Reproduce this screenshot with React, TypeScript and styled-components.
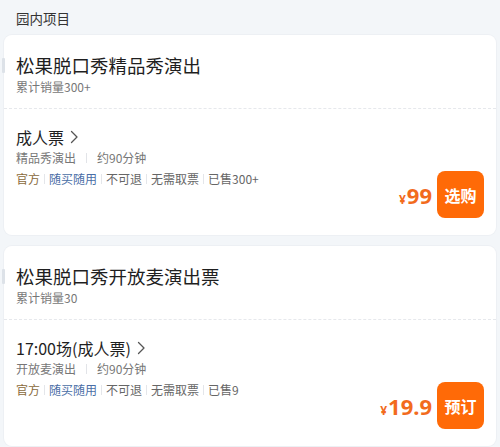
import { createGlobalStyle } from "styled-components";
import styled from "styled-components";

const GlobalStyle = createGlobalStyle`
  html, body {
    margin: 0;
    padding: 0;
    background: #f3f6f9;
  }
  body {
    font-family: "Noto Sans CJK SC", "Noto Sans", sans-serif;
    color: #222;
  }
`;

const Page = styled.div`
  width: 500px;
  padding-bottom: 4px;
`;

const SectionTitle = styled.div`
  padding: 7px 16px 6px;
  font-size: 13.5px;
  line-height: 22px;
  color: #333;
`;

const CardList = styled.div`
  display: flex;
  flex-direction: column;
  gap: 11px;
  padding: 0 4px;
`;

const Card = styled.div`
  position: relative;
  background: #fff;
  border-radius: 8px;
  box-shadow: 0 0 0 1px #edf0f4;
`;

const SideMark = styled.div`
  position: absolute;
  left: -2px;
  top: 23px;
  width: 3px;
  height: 15px;
  background: #dde2e8;
  border-radius: 1px;
`;

const CardHead = styled.div`
  padding: 17px 12px 12px;
  border-bottom: 1px dashed #e6e8ec;
`;

const ShowName = styled.div`
  font-size: 18.5px;
  line-height: 26px;
  color: #1f1f1f;
`;

const Sales = styled.div`
  font-size: 12px;
  line-height: 18px;
  color: #777;
`;

const CardBody = styled.div`
  display: flex;
  justify-content: space-between;
  align-items: flex-end;
  padding: 16px 12px 17px;
`;

const TicketInfo = styled.div`
  display: flex;
  flex-direction: column;
  padding-bottom: 30px;
`;

const TicketName = styled.div`
  display: flex;
  align-items: center;
  gap: 6px;
  font-size: 16px;
  line-height: 24px;
  color: #1f1f1f;
`;

const Meta = styled.div`
  display: flex;
  align-items: center;
  font-size: 12px;
  line-height: 18px;
  color: #777;
`;

const MetaSep = styled.span`
  width: 1px;
  height: 10px;
  margin: 0 10px;
  background: #e2e4e8;
`;

const Tags = styled.div`
  display: flex;
  align-items: center;
  margin-top: 3px;
  font-size: 12px;
  line-height: 18px;
`;

const Tag = styled.span<{ $tone?: "gold" | "blue" }>`
  color: ${(p) =>
    p.$tone === "gold" ? "#8a6a3c" : p.$tone === "blue" ? "#4a6ea6" : "#666"};
`;

const TagSep = styled.span`
  width: 1px;
  height: 10px;
  margin: 0 4px;
  background: #e4e6ea;
`;

const Buy = styled.div`
  display: flex;
  align-items: center;
  gap: 5px;
`;

const Price = styled.div`
  display: flex;
  align-items: baseline;
  color: #f26b1d;
  font-family: "Noto Sans", "Open Sans", sans-serif;
  font-weight: 700;
`;

const Yen = styled.span`
  font-size: 12px;
  margin-right: 1px;
`;

const Amount = styled.span`
  font-size: 22px;
  line-height: 26px;
`;

const BuyButton = styled.button`
  width: 47px;
  height: 47px;
  border: none;
  border-radius: 8px;
  background: #ff6a07;
  color: #fff;
  font-family: "Noto Sans CJK SC", sans-serif;
  font-size: 16px;
  font-weight: 700;
  padding: 0;
  cursor: pointer;
`;

const Chevron = () => (
  <svg width="9" height="14" viewBox="0 0 9 14" fill="none">
    <polyline
      points="1.5,1.5 7,7 1.5,12.5"
      stroke="#555"
      strokeWidth="1.3"
      strokeLinecap="round"
      strokeLinejoin="round"
    />
  </svg>
);

type Show = {
  name: string;
  sales: string;
  ticket: string;
  kind: string;
  sold: string;
  price: string;
  action: string;
};

const shows: Show[] = [
  {
    name: "松果脱口秀精品秀演出",
    sales: "累计销量300+",
    ticket: "成人票",
    kind: "精品秀演出",
    sold: "已售300+",
    price: "99",
    action: "选购",
  },
  {
    name: "松果脱口秀开放麦演出票",
    sales: "累计销量30",
    ticket: "17:00场(成人票)",
    kind: "开放麦演出",
    sold: "已售9",
    price: "19.9",
    action: "预订",
  },
];

const ShowCard = ({ show }: { show: Show }) => (
  <Card>
    <SideMark />
    <CardHead>
      <ShowName>{show.name}</ShowName>
      <Sales>{show.sales}</Sales>
    </CardHead>
    <CardBody>
      <TicketInfo>
        <TicketName>
          {show.ticket}
          <Chevron />
        </TicketName>
        <Meta>
          {show.kind}
          <MetaSep />
          约90分钟
        </Meta>
        <Tags>
          <Tag $tone="gold">官方</Tag>
          <TagSep />
          <Tag $tone="blue">随买随用</Tag>
          <TagSep />
          <Tag>不可退</Tag>
          <TagSep />
          <Tag>无需取票</Tag>
          <TagSep />
          <Tag>{show.sold}</Tag>
        </Tags>
      </TicketInfo>
      <Buy>
        <Price>
          <Yen>¥</Yen>
          <Amount>{show.price}</Amount>
        </Price>
        <BuyButton>{show.action}</BuyButton>
      </Buy>
    </CardBody>
  </Card>
);

const App = () => (
  <Page>
    <GlobalStyle />
    <SectionTitle>园内项目</SectionTitle>
    <CardList>
      {shows.map((s) => (
        <ShowCard key={s.name} show={s} />
      ))}
    </CardList>
  </Page>
);

export default App;
